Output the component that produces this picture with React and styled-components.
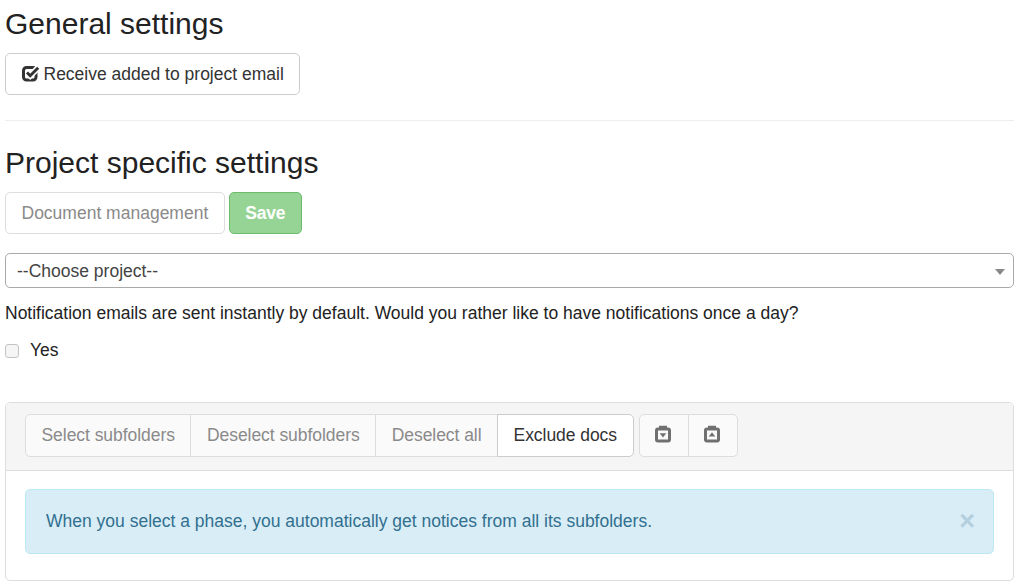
import React from 'react';
import styled, { createGlobalStyle } from 'styled-components';

const Global = createGlobalStyle`
  * { box-sizing: border-box; }
  html, body { margin: 0; background: #fff; }
  body {
    font-family: 'Liberation Sans', Arial, sans-serif;
    font-size: 17.5px;
    line-height: 1.42857;
    color: #222;
    overflow: hidden;
  }
`;

const Page = styled.div`
  width: 1029px;
  height: 585px;
  padding: 0 15px 0 5px;
`;

const Heading = styled.h2`
  margin: ${(p) => p.$top}px 0 13px;
  font-size: 30px;
  font-weight: 400;
  line-height: 33px;
  color: #222;
`;

const Button = styled.button`
  display: inline-flex;
  align-items: center;
  height: 42px;
  padding: 0 15.5px;
  font: inherit;
  color: #333;
  background: #fff;
  border: 1px solid #ccc;
  border-radius: 5px;
`;

const CheckIcon = styled.svg`
  width: 18px;
  height: 18px;
  margin-right: 4px;
  margin-top: -3px;
  fill: none;
`;

const Divider = styled.hr`
  margin: 25px 0 25px;
  border: 0;
  border-top: 1px solid #eee;
`;

const ButtonRow = styled.div`
  display: flex;
  gap: 4px;
`;

const SaveButton = styled(Button)`
  color: #fff;
  font-weight: 700;
  letter-spacing: -0.2px;
  background: #96d495;
  border-color: #6dbb6d;
`;

const DisabledButton = styled(Button)`
  color: #8a8a8a;
  border-color: #ddd;
`;

const Select = styled.div`
  position: relative;
  height: 35px;
  margin-top: 19px;
  padding: 0 11px;
  line-height: 35px;
  color: #444;
  border: 1px solid #aaa;
  border-radius: 5px;
`;

const Caret = styled.span`
  position: absolute;
  right: 8px;
  top: 15px;
  border-top: 6px solid #888;
  border-left: 5px solid transparent;
  border-right: 5px solid transparent;
`;

const Note = styled.p`
  margin: 13px 0 0;
  line-height: 25px;
  color: #222;
`;

const CheckRow = styled.label`
  display: flex;
  align-items: center;
  gap: 11px;
  margin-top: 12px;
  height: 25px;
`;

const Box = styled.span`
  width: 14px;
  height: 14px;
  background: #f5f5f5;
  border: 1px solid #c4c4c4;
  border-radius: 3px;
`;

const Panel = styled.section`
  margin-top: 39px;
  height: 179px;
  background: #fff;
  border: 1px solid #ddd;
  border-radius: 5px;
  overflow: hidden;
`;

const PanelHead = styled.div`
  display: flex;
  gap: 5px;
  height: 68px;
  padding: 11px 19px;
  background: #f5f5f5;
  border-bottom: 1px solid #ddd;
`;

const Group = styled.div`
  display: flex;
`;

const GroupButton = styled(Button)`
  height: 43px;
  letter-spacing: -0.05px;
  color: ${(p) => (p.$active ? '#333' : '#8a8a8a')};
  background: ${(p) => (p.$active ? '#fff' : '#fafafa')};
  border-color: ${(p) => (p.$active ? '#ccc' : '#ddd')};
  border-radius: 0;
  margin-left: -1px;
  &:first-child {
    margin-left: 0;
    border-radius: 5px 0 0 5px;
  }
  &:last-child {
    border-radius: 0 5px 5px 0;
  }
`;

const CaretIcon = styled.svg`
  width: 17px;
  height: 18px;
  margin-top: -4px;
  fill: #707070;
`;

const PanelBody = styled.div`
  padding: 18px 19px;
`;

const Alert = styled.div`
  display: flex;
  align-items: center;
  justify-content: space-between;
  height: 65px;
  padding: 0 18px 0 20px;
  color: #31708f;
  background: #d9edf7;
  border: 1px solid #bce8f1;
  border-radius: 5px;
`;

const Close = styled.span`
  font-size: 27px;
  font-weight: 700;
  line-height: 1;
  color: #b4cfdd;
`;

const CaretSquare = ({ up }) => (
  <CaretIcon viewBox="0 0 17 18">
    <path
      fillRule="evenodd"
      d="M3 2.5H4V0.8h8V2.5h1A3 3 0 0 1 16 5.5v9a3 3 0 0 1-3 3H3a3 3 0 0 1-3-3v-9a3 3 0 0 1 3-3zM3 5.5v9h10v-9z"
    />
    <path d={up ? 'M8 7.2l3.3 4.3H4.7z' : 'M8 12.5L4.7 8.2h6.6z'} />
  </CaretIcon>
);

export default function App() {
  return (
    <Page>
      <Global />
      <Heading $top={7}>General settings</Heading>
      <Button>
        <CheckIcon viewBox="0 0 18 18">
          <rect x="1.5" y="3.5" width="12.5" height="12.5" rx="3" stroke="#333" strokeWidth="3" />
          <path d="M5 8.5l3.2 3.2 8-8" stroke="#fff" strokeWidth="6" />
          <path d="M5 8.5l3.2 3.2 8-8" stroke="#333" strokeWidth="3" />
        </CheckIcon>
        Receive added to project email
      </Button>
      <Divider />
      <Heading $top={0}>Project specific settings</Heading>
      <ButtonRow>
        <DisabledButton>Document management</DisabledButton>
        <SaveButton>Save</SaveButton>
      </ButtonRow>
      <Select>
        --Choose project--
        <Caret />
      </Select>
      <Note>Notification emails are sent instantly by default. Would you rather like to have notifications once a day?</Note>
      <CheckRow>
        <Box />
        Yes
      </CheckRow>
      <Panel>
        <PanelHead>
          <Group>
            <GroupButton>Select subfolders</GroupButton>
            <GroupButton>Deselect subfolders</GroupButton>
            <GroupButton>Deselect all</GroupButton>
            <GroupButton $active>Exclude docs</GroupButton>
          </Group>
          <Group>
            <GroupButton>
              <CaretSquare />
            </GroupButton>
            <GroupButton>
              <CaretSquare up />
            </GroupButton>
          </Group>
        </PanelHead>
        <PanelBody>
          <Alert>
            When you select a phase, you automatically get notices from all its subfolders.
            <Close>×</Close>
          </Alert>
        </PanelBody>
      </Panel>
    </Page>
  );
}
